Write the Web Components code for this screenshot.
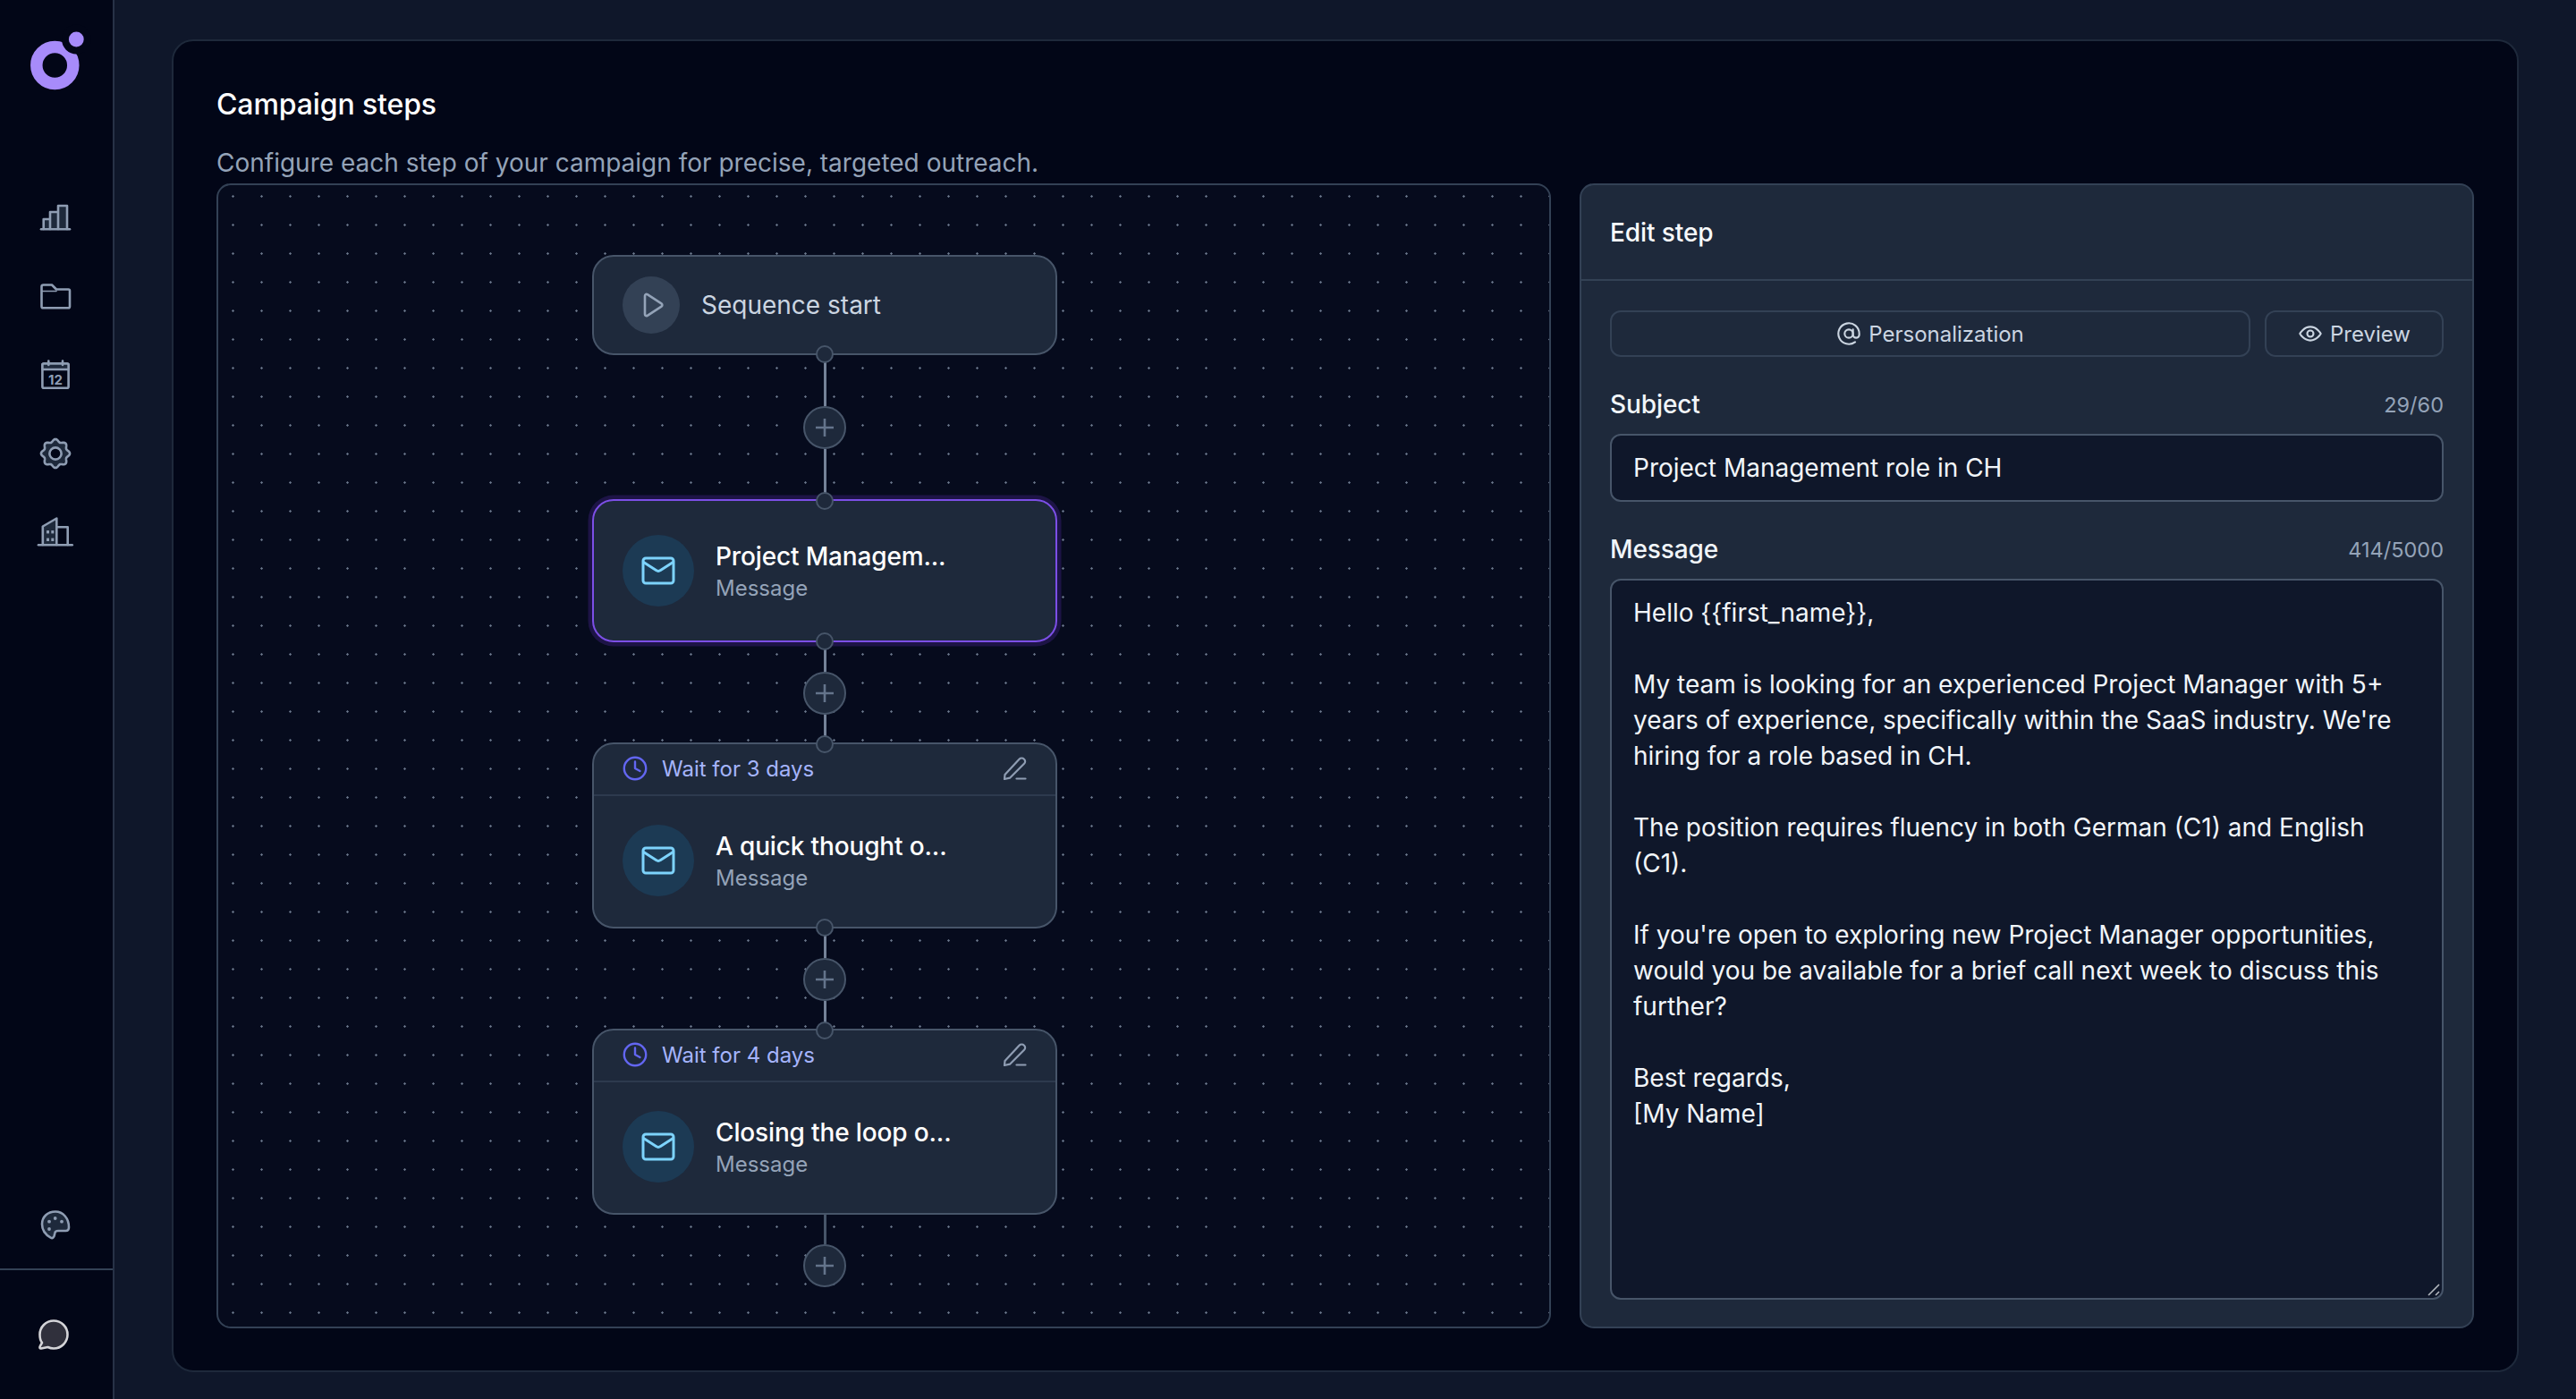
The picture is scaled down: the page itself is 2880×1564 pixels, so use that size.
<!DOCTYPE html>
<html lang="en"><head><meta charset="utf-8"><title>Campaign steps</title>
<style>
html,body{margin:0;padding:0;height:100%;background:#0f172a;font-family:Inter,"Noto Sans",sans-serif;color:#f1f5f9;overflow:hidden}
</style></head><body>
<app-shell>
  <side-nav slot="nav"></side-nav>
  <campaign-card>
    <span slot="title">Campaign steps</span>
    <span slot="sub">Configure each step of your campaign for precise, targeted outreach.</span>
    <flow-canvas slot="left">
      <flow-node kind="start">
        <step-icon slot="icon" kind="play"></step-icon>
        <span slot="title">Sequence start</span>
      </flow-node>
      <flow-connector gap="161"></flow-connector>
      <flow-node selected>
        <step-icon slot="icon" kind="mail"></step-icon>
        <span slot="title">Project Managem...</span>
        <span slot="sub">Message</span>
      </flow-node>
      <flow-connector gap="112"></flow-connector>
      <flow-node tall>
        <wait-bar slot="header">Wait for 3 days</wait-bar>
        <step-icon slot="icon" kind="mail"></step-icon>
        <span slot="title">A quick thought o...</span>
        <span slot="sub">Message</span>
      </flow-node>
      <flow-connector gap="112"></flow-connector>
      <flow-node tall nobottom>
        <wait-bar slot="header">Wait for 4 days</wait-bar>
        <step-icon slot="icon" kind="mail"></step-icon>
        <span slot="title">Closing the loop o...</span>
        <span slot="sub">Message</span>
      </flow-node>
      <flow-connector last></flow-connector>
    </flow-canvas>
    <edit-panel slot="right">
      <span slot="title">Edit step</span>
      <ghost-button slot="personalize" icon="at" grow>Personalization</ghost-button>
      <ghost-button slot="preview" icon="eye">Preview</ghost-button>
      <form-field slot="subject" label="Subject" count="29/60">Project Management role in CH</form-field>
      <form-field slot="message" label="Message" count="414/5000" multiline>Hello {{first_name}},

My team is looking for an experienced Project Manager with 5+ years of experience, specifically within the SaaS industry. We're hiring for a role based in CH.

The position requires fluency in both German (C1) and English (C1).

If you're open to exploring new Project Manager opportunities, would you be available for a brief call next week to discuss this further?

Best regards,
[My Name]</form-field>
    </edit-panel>
  </campaign-card>
</app-shell>
<script>
const define=(name,css,html)=>customElements.define(name,class extends HTMLElement{
  constructor(){super();const r=this.attachShadow({mode:'open'});
    r.innerHTML='<style>'+css+'</style>'+(typeof html==='function'?html(this):html);}
});
const gear=(()=>{let d='';for(let i=0;i<=96;i++){const t=i/96*2*Math.PI,r=14.6+1.5*Math.cos(8*t);
  const x=24+r*Math.sin(t),y=24-r*Math.cos(t);d+=(i?'L':'M')+x.toFixed(2)+' '+y.toFixed(2);}return d+'Z';})();

define('app-shell',`:host{display:flex;width:2880px;height:1564px;box-sizing:border-box}
  main{flex:1;min-width:0;box-sizing:border-box;padding:44px 64px 30px 64px;display:flex}`,
  `<slot name="nav"></slot><main><slot></slot></main>`);

const S='fill="none" stroke="#8f9db3" stroke-width="2.6" stroke-linejoin="round" stroke-linecap="round"';
const ico=(inner,cls='')=>`<svg class="${cls}" width="48" height="48" viewBox="0 0 48 48" ${S}>${inner}</svg>`;
define('side-nav',`:host{display:flex;flex-direction:column;flex:none;width:128px;height:1564px;box-sizing:border-box;
    background:#020617;border-right:2px solid #273246;padding:20px 0 48px 0}
  svg{display:block;flex:none}
  .logo{margin:0 0 99px 20px}
  nav{display:flex;flex-direction:column;gap:40px;padding-left:38px}
  .bottom{margin-top:auto;display:flex;flex-direction:column}
  .pal{margin:0 0 25px 38px}
  hr{margin:0;border:0;height:2px;background:#334155}
  .chat{margin:48px 0 0 38px}
  text{font-family:Inter,sans-serif;font-weight:700;font-size:15px;fill:#8f9db3;stroke:none}`,
 `<svg class="logo" width="100" height="100" viewBox="0 0 100 100">
    <circle cx="41.3" cy="53" r="20.5" fill="none" stroke="#a78bfa" stroke-width="13.5"/>
    <circle cx="65.5" cy="24" r="16.5" fill="#020617"/>
    <circle cx="65.3" cy="24" r="8.4" fill="#a78bfa"/>
  </svg>
  <nav>
   ${ico(`<path d="M10.7 37V26H18V37M18 37V18H27V37M27 37V11H37V37" fill="#1e293b"/><path d="M8 37.3H40"/>`)}
   ${ico(`<path d="M8.5 13.5C8.5 12 9.5 11.5 10.5 11.5H20L25 16.5H38.5C39.5 16.5 40 17 40 18V35.5C40 36.5 39.5 37.3 38.5 37.3H10C9 37.3 8.5 36.5 8.5 35.5Z"/><path d="M9 18.5H25" stroke-width="1.6"/>`)}
   ${ico(`<rect x="9.4" y="11.5" width="29.2" height="27.2" rx="1.5"/><path d="M9.4 18H38.6V13C38.6 12 38 11.5 37 11.5H11C10 11.5 9.4 12 9.4 13Z" fill="#1e293b"/><path d="M16.3 8.5V13M32 8.5V13"/><text x="24" y="34.5" text-anchor="middle">12</text>`)}
   ${ico(`<path d="${gear}" fill="#1e293b"/><circle cx="24" cy="24" r="6.6" fill="#020617"/>`)}
   ${ico(`<path d="M9.8 38V17.5L25.3 8.5V38" fill="#1e293b"/><path d="M25.3 18.3H37.7V38"/><path d="M5 38.3H42.7"/><g stroke="none" fill="#8f9db3"><rect x="14" y="22" width="3" height="3.4"/><rect x="19.3" y="22" width="3" height="3.4"/><rect x="14" y="30.6" width="3" height="3.4"/><rect x="19.3" y="30.6" width="3" height="3.4"/></g>`)}
  </nav>
  <div class="bottom">
   ${ico(`<path d="M24 9.5C15 9.5 9 15.5 9 23.5C9 31 14 36 18.7 38.7C20.7 39.7 22.3 38.6 22.8 36L23.3 33.5C23.6 31.7 25 31 27 31H35.5C38 31 39 29.5 39 27C39 17 32.5 9.5 24 9.5Z" fill="#1e293b"/><g stroke="none" fill="#8f9db3"><circle cx="17" cy="20.7" r="1.9"/><circle cx="23.7" cy="17" r="1.9"/><circle cx="31" cy="20.7" r="1.9"/><circle cx="17" cy="29" r="1.9"/></g>`,'pal')}
   <hr>
   <svg class="chat" width="48" height="48" viewBox="0 0 48 48"><path d="M22 8.5A15.5 15.5 0 0 1 22 39.5C19.5 39.5 17.5 39 15.5 38L8 39.5C6.5 39.7 6 38.5 6.8 37L9 33C7 30.5 6.5 27 6.5 24A15.5 15.5 0 0 1 22 8.5Z" fill="#30303c" stroke="#d4d4d8" stroke-width="2.6" stroke-linejoin="round"/></svg>
  </div>`);

define('campaign-card',`:host{display:flex;flex-direction:column;flex:1;min-width:0;box-sizing:border-box;background:#020617;
    border:2px solid #1e293b;border-radius:24px;padding:47px 48px 47px 48px}
  h2{margin:0;font-size:32px;line-height:48px;font-weight:500;letter-spacing:-.12px;color:#fff}
  p{margin:21px 0 3px;font-size:28px;line-height:40px;color:#94a3b8;font-weight:400}
  .row{flex:1;min-height:0;display:grid;grid-template-columns:1fr 1000px;gap:32px}`,
 `<h2><slot name="title"></slot></h2><p><slot name="sub"></slot></p>
  <div class="row"><slot name="left"></slot><slot name="right"></slot></div>`);

define('flow-canvas',`:host{display:block;min-width:0;box-sizing:border-box;border:2px solid #334155;border-radius:16px;overflow:hidden;
    background-color:#060b1d;
    background-image:radial-gradient(circle at 16.5px 12.5px,#6b788c 0,#6b788c .9px,transparent 1.5px);
    background-size:32px 32px;background-origin:padding-box}
  .col{display:flex;flex-direction:column;width:520px;margin-left:418px;padding-top:78px}`,
 `<div class="col"><slot></slot></div>`);

define('flow-node',`:host{display:block;position:relative;box-sizing:border-box;width:520px;background:#1e293b;border:2px solid #475569;border-radius:24px;
    height:160px;z-index:1}
  :host([kind=start]){height:112px}
  :host([tall]){height:208px}
  :host([selected]){border:2.5px solid #7c4fe6;box-shadow:0 0 0 4.5px rgba(124,58,237,.2)}
  .wrap{display:flex;flex-direction:column;height:100%}
  .body{flex:1;display:flex;align-items:center;gap:24px;padding:0 32px}
  :host([tall]) .body{padding-bottom:2px}
  .txt{display:flex;flex-direction:column;min-width:0}
  .t{font-size:28px;line-height:40px;font-weight:500;letter-spacing:-.15px;color:#fff}
  :host([kind=start]) .t{font-size:28px;font-weight:400;letter-spacing:0;color:#cbd5e1}
  .s{font-size:24px;line-height:32px;color:#94a3b8}
  :host([kind=start]) .s{display:none}
  .h{position:absolute;left:50%;width:20px;height:20px;margin-left:-10px;box-sizing:border-box;border-radius:50%;background:#1e293b;border:2px solid #475569;z-index:2}
  .top{top:-10px}.bot{bottom:-11px}
  :host([kind=start]) .top{display:none}
  :host([nobottom]) .bot{display:none}`,
 `<i class="h top"></i><div class="wrap"><slot name="header"></slot><div class="body"><slot name="icon"></slot>
   <div class="txt"><div class="t"><slot name="title"></slot></div><div class="s"><slot name="sub"></slot></div></div></div></div><i class="h bot"></i>`);

define('wait-bar',`:host{display:flex;align-items:center;flex:none;box-sizing:border-box;height:58px;padding:0 32px 2px 32px;border-bottom:2px solid #2d3a4e;
    font-size:24px;color:#a5b4fc;gap:16px}
  svg{display:block;flex:none}
  .grow{flex:1}`,
 `<svg width="28" height="28" viewBox="0 0 28 28" fill="none" stroke="#6366f1" stroke-width="2.4" stroke-linecap="round" stroke-linejoin="round"><circle cx="14" cy="14" r="12.2"/><path d="M14 6.5V14L19.5 17"/></svg>
  <span class="grow"><slot></slot></span>
  <svg width="28" height="28" viewBox="0 0 28 28" fill="none" stroke="#8f9db3" stroke-width="2.2" stroke-linecap="round" stroke-linejoin="round"><path d="M3 26L3.5 21L19.5 3.7C21 2.2 23.5 2.2 25 3.7C26.5 5.2 26.5 7.2 25 8.7L9 24.7Z"/><path d="M16.5 25.5H26.5"/></svg>`);

define('step-icon',`:host{display:flex;align-items:center;justify-content:center;flex:none;border-radius:50%}
  :host([kind=play]){width:64px;height:64px;background:#334155}
  :host([kind=mail]){width:80px;height:80px;background:#1c3a54}
  svg{display:block}`,
 el=>el.getAttribute('kind')==='play'
  ?`<svg width="32" height="32" viewBox="0 0 32 32" fill="none" stroke="#94a3b8" stroke-width="2.6" stroke-linejoin="round"><path d="M9 5.8C9 4.2 10.4 3.4 11.8 4.2L27.5 14.3C28.7 15.1 28.7 16.9 27.5 17.7L11.8 27.8C10.4 28.6 9 27.8 9 26.2Z"/></svg>`
  :`<svg width="40" height="40" viewBox="0 0 40 40" fill="none" stroke="#7dd3fc" stroke-width="3" stroke-linejoin="round" stroke-linecap="round"><rect x="3" y="6" width="34" height="28" rx="3"/><path d="M3.5 10.5L17.5 19.6C19 20.6 21 20.6 22.5 19.6L36.5 10.5"/></svg>`);

define('flow-connector',`:host{display:flex;flex-direction:column;align-items:center;flex:none;width:520px;box-sizing:border-box}
  :host([gap="112"]){padding-top:1px}
  .l{flex:1;width:3px;background:#748298}
  :host([last]) .l{flex:none;height:33px;background:#475569}
  :host([last]) .l2{display:none}
  .p{flex:none;width:48px;height:48px;box-sizing:border-box;border-radius:50%;background:#1e293b;border:2px solid #475569;display:flex;align-items:center;justify-content:center}
  svg{display:block}`,
 el=>`<style>:host{height:${el.hasAttribute('last')?81:(el.getAttribute('gap')||112)}px}</style>
  <i class="l"></i><span class="p"><svg width="24" height="24" viewBox="0 0 24 24" stroke="#64748b" stroke-width="2.6"><path d="M12 2V22M2 12H22"/></svg></span><i class="l l2"></i>`);

define('edit-panel',`:host{display:flex;flex-direction:column;min-width:0;min-height:0;box-sizing:border-box;background:#1e293b;border:2px solid #334155;border-radius:16px}
  header{flex:none;height:107px;box-sizing:border-box;border-bottom:2px solid #334155;display:flex;align-items:center;padding:0 32px;font-size:28px;font-weight:500;letter-spacing:-.1px;color:#f8fafc}
  .b{flex:1;min-height:0;display:flex;flex-direction:column;padding:33px 32px 30px}
  .btns{display:flex;gap:16px;flex:none;margin-bottom:33px}
  ::slotted([slot=subject]){flex:none;margin-bottom:33px}
  ::slotted([slot=message]){flex:1;min-height:0}`,
 `<header><slot name="title"></slot></header><div class="b"><div class="btns"><slot name="personalize"></slot><slot name="preview"></slot></div>
  <slot name="subject"></slot><slot name="message"></slot></div>`);

const G={at:`<circle cx="12" cy="12" r="4"/><path d="M16 8v5a3 3 0 0 0 6 0v-1a10 10 0 1 0-4 8"/>`,
 eye:`<path d="M2 12s3.5-6.5 10-6.5S22 12 22 12s-3.5 6.5-10 6.5S2 12 2 12Z"/><circle cx="12" cy="12" r="3"/>`};
define('ghost-button',`:host{display:flex;align-items:center;justify-content:center;gap:8px;box-sizing:border-box;height:52px;width:200px;flex:none;
    border:2px solid #334155;border-radius:12px;font-size:24px;color:#cbd5e1}
  :host([grow]){flex:1;width:auto}
  svg{display:block;flex:none}`,
 el=>`<svg width="28" height="28" viewBox="0 0 24 24" fill="none" stroke="#cbd5e1" stroke-width="1.8" stroke-linecap="round" stroke-linejoin="round">${G[el.getAttribute('icon')]}</svg><slot></slot>`);

define('form-field',`:host{display:flex;flex-direction:column;min-height:0}
  .top{flex:none;display:flex;justify-content:space-between;align-items:center;height:40px;margin-bottom:13px;font-size:28px;font-weight:500;letter-spacing:-.1px;color:#f1f5f9}
  .c{font-size:23.5px;font-weight:400;letter-spacing:0;color:#94a3b8}
  .box{box-sizing:border-box;border:2px solid #475569;border-radius:12px;background:#0f172a;font-size:28px;line-height:40px;font-weight:400;letter-spacing:0;color:#f1f5f9;padding:16px 24px}
  :host(:not([multiline])) .box{height:76px;display:flex;align-items:center}
  :host([multiline]) .box{flex:1;min-height:0;white-space:pre-wrap;position:relative}
  .grip{position:absolute;right:1px;bottom:1px;display:none}
  :host([multiline]) .grip{display:block}`,
 el=>`<div class="top"><span>${el.getAttribute('label')}</span><span class="c">${el.getAttribute('count')}</span></div>
  <div class="box"><slot></slot><svg class="grip" width="16" height="16" viewBox="0 0 16 16" stroke="#b4b8bf" stroke-width="1.6"><path d="M2 14L14 2M10 14L14 10"/></svg></div>`);
</script>
</body></html>
